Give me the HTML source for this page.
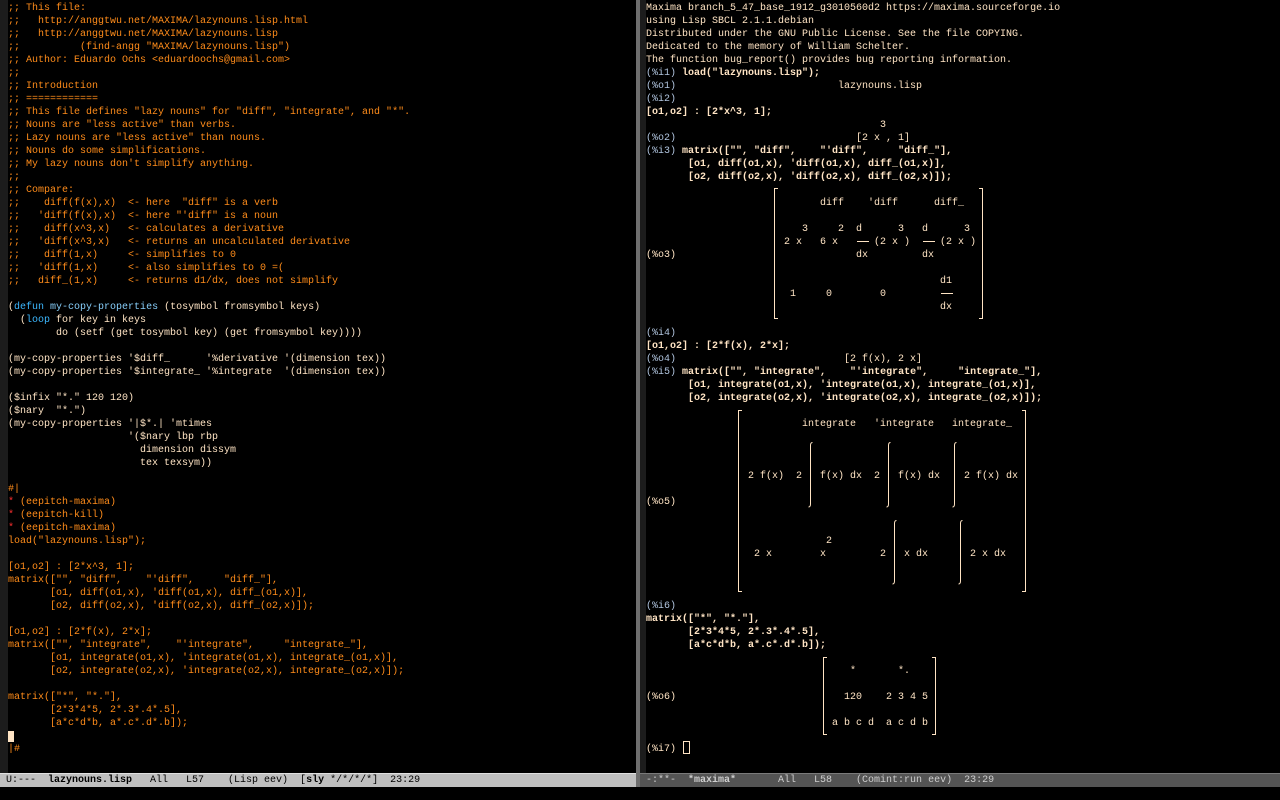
<!DOCTYPE html>
<html><head><meta charset="utf-8">
<style>
html,body{margin:0;padding:0;background:#000;width:1280px;height:800px;overflow:hidden;position:relative}
*{box-sizing:border-box}
pre,.t{font-family:"Liberation Mono","DejaVu Sans Mono",monospace;font-size:10px;line-height:13px;margin:0;white-space:pre}
.c{color:#ff8c1a}.k{color:#3cb8ff}.f{color:#87cefa}.s{color:#ff3030}
#L{position:absolute;left:8px;top:2px;color:#ffe4c4}
#R{position:absolute;left:646px;top:0;width:634px;height:773px}
#R .t{position:absolute;color:#ffe4c4;transform:translateY(2px)}
.p{color:#b0c4de}
.b{font-weight:bold}
.fl{position:absolute;top:0;height:773px;background:#1c1c1c}
.br{position:absolute;border:1px solid #ffe4c4}
.bl{border-right:none}.bR{border-left:none}
.bar{position:absolute;height:1px;background:#ffe4c4}
.ml{position:absolute;top:773px;height:14px;font-family:"Liberation Mono",monospace;font-size:10px;line-height:13px;white-space:pre;padding-left:6px}
</style></head><body>
<div class="fl" style="left:0;width:8px"></div>
<div class="fl" style="left:640px;width:6px"></div>
<div style="position:absolute;left:636px;top:0;width:4px;height:787px;background:#6e6e6e"></div>
<pre id="L"><span class="c">;; This file:
;;   http://anggtwu.net/MAXIMA/lazynouns.lisp.html
;;   http://anggtwu.net/MAXIMA/lazynouns.lisp
;;          (find-angg "MAXIMA/lazynouns.lisp")
;; Author: Eduardo Ochs &lt;eduardoochs@gmail.com&gt;
;;
;; Introduction
;; ============
;; This file defines "lazy nouns" for "diff", "integrate", and "*".
;; Nouns are "less active" than verbs.
;; Lazy nouns are "less active" than nouns.
;; Nouns do some simplifications.
;; My lazy nouns don't simplify anything.
;;
;; Compare:
;;    diff(f(x),x)  &lt;- here  "diff" is a verb
;;   'diff(f(x),x)  &lt;- here "'diff" is a noun
;;    diff(x^3,x)   &lt;- calculates a derivative
;;   'diff(x^3,x)   &lt;- returns an uncalculated derivative
;;    diff(1,x)     &lt;- simplifies to 0
;;   'diff(1,x)     &lt;- also simplifies to 0 =(
;;   diff_(1,x)     &lt;- returns d1/dx, does not simplify</span>

(<span class="k">defun</span> <span class="f">my-copy-properties</span> (tosymbol fromsymbol keys)
  (<span class="k">loop</span> for key in keys
        do (setf (get tosymbol key) (get fromsymbol key))))

(my-copy-properties '$diff_      '%derivative '(dimension tex))
(my-copy-properties '$integrate_ '%integrate  '(dimension tex))

($infix "*." 120 120)
($nary  "*.")
(my-copy-properties '|$*.| 'mtimes
                    '($nary lbp rbp
                      dimension dissym
                      tex texsym))

<span class="c">#|
<span class="s">*</span> (eepitch-maxima)
<span class="s">*</span> (eepitch-kill)
<span class="s">*</span> (eepitch-maxima)
load("lazynouns.lisp");

[o1,o2] : [2*x^3, 1];
matrix(["", "diff",    "'diff",     "diff_"],
       [o1, diff(o1,x), 'diff(o1,x), diff_(o1,x)],
       [o2, diff(o2,x), 'diff(o2,x), diff_(o2,x)]);

[o1,o2] : [2*f(x), 2*x];
matrix(["", "integrate",    "'integrate",     "integrate_"],
       [o1, integrate(o1,x), 'integrate(o1,x), integrate_(o1,x)],
       [o2, integrate(o2,x), 'integrate(o2,x), integrate_(o2,x)]);

matrix(["*", "*."],
       [2*3*4*5, 2*.3*.4*.5],
       [a*c*d*b, a*.c*.d*.b]);
<span style="background:#ffe4c4"> </span>
|#</span></pre>

<div id="R">
<div class="t" style="left:0;top:0">Maxima branch_5_47_base_1912_g3010560d2 https://maxima.sourceforge.io
using Lisp SBCL 2.1.1.debian
Distributed under the GNU Public License. See the file COPYING.
Dedicated to the memory of William Schelter.
The function bug_report() provides bug reporting information.
<span class="p">(%i1)</span> <span class="b">load("lazynouns.lisp");</span>
<span class="p">(%o1)</span>                           lazynouns.lisp
<span class="p">(%i2)</span>
<span class="b">[o1,o2] : [2*x^3, 1];</span>
                                       3
<span class="p">(%o2)</span>                              [2 x , 1]
<span class="p">(%i3)</span> <span class="b">matrix(["", "diff",    "'diff",     "diff_"],
       [o1, diff(o1,x), 'diff(o1,x), diff_(o1,x)],
       [o2, diff(o2,x), 'diff(o2,x), diff_(o2,x)]);</span></div>
<div class="t" style="left:174px;top:195px">diff</div>
<div class="t" style="left:222px;top:195px">'diff</div>
<div class="t" style="left:288px;top:195px">diff_</div>
<div class="t" style="left:156px;top:221px">3</div>
<div class="t" style="left:192px;top:221px">2</div>
<div class="t" style="left:210px;top:221px">d</div>
<div class="t" style="left:252px;top:221px">3</div>
<div class="t" style="left:276px;top:221px">d</div>
<div class="t" style="left:318px;top:221px">3</div>
<div class="t" style="left:138px;top:234px">2 x</div>
<div class="t" style="left:174px;top:234px">6 x</div>
<div class="t" style="left:228px;top:234px">(2 x )</div>
<div class="t" style="left:294px;top:234px">(2 x )</div>
<div class="bar" style="left:211px;top:241px;width:12px"></div>
<div class="bar" style="left:277px;top:241px;width:12px"></div>
<div class="t p" style="left:0;top:247px">(%o3)</div>
<div class="t" style="left:210px;top:247px">dx</div>
<div class="t" style="left:276px;top:247px">dx</div>
<div class="t" style="left:294px;top:273px">d1</div>
<div class="t" style="left:144px;top:286px">1</div>
<div class="t" style="left:180px;top:286px">0</div>
<div class="t" style="left:234px;top:286px">0</div>
<div class="bar" style="left:295px;top:293px;width:12px"></div>
<div class="t" style="left:294px;top:299px">dx</div>
<div class="br bl" style="left:128px;top:188px;width:4px;height:131px"></div>
<div class="br bR" style="left:333px;top:188px;width:4px;height:131px"></div>

<div class="t" style="left:0;top:325px"><span class="p">(%i4)</span>
<span class="b">[o1,o2] : [2*f(x), 2*x];</span>
<span class="p">(%o4)</span>                            [2 f(x), 2 x]
<span class="p">(%i5)</span> <span class="b">matrix(["", "integrate",    "'integrate",     "integrate_"],
       [o1, integrate(o1,x), 'integrate(o1,x), integrate_(o1,x)],
       [o2, integrate(o2,x), 'integrate(o2,x), integrate_(o2,x)]);</span></div>
<div class="t" style="left:156px;top:416px">integrate</div>
<div class="t" style="left:228px;top:416px">'integrate</div>
<div class="t" style="left:306px;top:416px">integrate_</div>
<div class="t" style="left:102px;top:468px">2 f(x)</div>
<div class="t" style="left:150px;top:468px">2</div>
<div class="t" style="left:174px;top:468px">f(x) dx</div>
<div class="t" style="left:228px;top:468px">2</div>
<div class="t" style="left:252px;top:468px">f(x) dx</div>
<div class="t" style="left:318px;top:468px">2 f(x) dx</div>
<div class="t p" style="left:0;top:494px">(%o5)</div>
<div class="t" style="left:180px;top:533px">2</div>
<div class="t" style="left:108px;top:546px">2 x</div>
<div class="t" style="left:174px;top:546px">x</div>
<div class="t" style="left:234px;top:546px">2</div>
<div class="t" style="left:258px;top:546px">x dx</div>
<div class="t" style="left:324px;top:546px">2 x dx</div>
<div class="br bl" style="left:92px;top:410px;width:4px;height:182px"></div>
<div class="br bR" style="left:376px;top:410px;width:4px;height:182px"></div>

<div class="t" style="left:0;top:598px"><span class="p">(%i6)</span>
<span class="b">matrix(["*", "*."],
       [2*3*4*5, 2*.3*.4*.5],
       [a*c*d*b, a*.c*.d*.b]);</span></div>
<div class="t" style="left:204px;top:663px">*</div>
<div class="t" style="left:252px;top:663px">*.</div>
<div class="t p" style="left:0;top:689px">(%o6)</div>
<div class="t" style="left:198px;top:689px">120</div>
<div class="t" style="left:240px;top:689px">2 3 4 5</div>
<div class="t" style="left:186px;top:715px">a b c d</div>
<div class="t" style="left:240px;top:715px">a c d b</div>
<div class="br bl" style="left:177px;top:657px;width:4px;height:78px"></div>
<div class="br bR" style="left:286px;top:657px;width:4px;height:78px"></div>
<div class="t p" style="left:0;top:741px">(%i7)</div>
<div style="position:absolute;left:37px;top:741px;width:7px;height:13px;border:1px solid #ffe4c4"></div>
</div>

<svg style="position:absolute;left:0;top:0" width="1280" height="800">
<g fill="none" stroke="#ffe4c4" stroke-width="1">
<path d="M812.5 442.5 q-2 0 -2 3 V504 q0 3 -2 3"/>
<path d="M890.5 442.5 q-2 0 -2 3 V504 q0 3 -2 3"/>
<path d="M956.5 442.5 q-2 0 -2 3 V504 q0 3 -2 3"/>
<path d="M896.5 520.5 q-2 0 -2 3 V581 q0 3 -2 3"/>
<path d="M962.5 520.5 q-2 0 -2 3 V581 q0 3 -2 3"/>
</g></svg>

<div class="ml" style="left:0;width:636px;background:#bfbfbf;color:#000;border-top:1px solid #e0e0e0">U:---  <b>lazynouns.lisp</b>   All   L57    (Lisp eev)  [<b>sly</b> */*/*/*]  23:29</div>
<div class="ml" style="left:640px;width:640px;background:#545454;color:#cfcfcf;border-top:1px solid #7a7a7a">-:**-  <b>*maxima*</b>       All   L58    (Comint:run eev)  23:29</div>
</body></html>
